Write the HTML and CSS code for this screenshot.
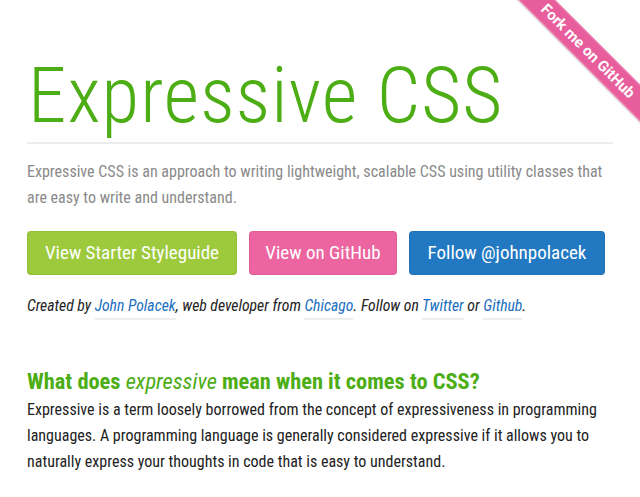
FILE: index.html
```html
<!DOCTYPE html>
<html lang="en">
<head>
<meta charset="utf-8">
<title>Expressive CSS</title>
<link rel="stylesheet" href="styles.css">
</head>
<body>
<a class="ribbon" href="#">Fork me on GitHub</a>
<main class="container">
  <header class="intro">
    <h1 class="title">Expressive CSS</h1>
    <p class="lead">Expressive CSS is an approach to writing lightweight, scalable CSS using utility classes that are easy to write and understand.</p>
  </header>
  <div class="actions">
    <a class="btn btn-green" href="#">View Starter Styleguide</a>
    <a class="btn btn-pink" href="#">View on GitHub</a>
    <a class="btn btn-blue" href="#">Follow @johnpolacek</a>
  </div>
  <p class="credit">Created by <a href="#">John Polacek</a>, web developer from <a href="#">Chicago</a>. Follow on <a href="#">Twitter</a> or <a href="#">Github</a>.</p>
  <section class="section">
    <h2 class="heading">What does <em>expressive</em> mean when it comes to CSS?</h2>
    <p class="body">Expressive is a term loosely borrowed from the concept of expressiveness in programming languages. A programming language is generally considered expressive if it allows you to naturally express your thoughts in code that is easy to understand.</p>
  </section>
</main>
</body>
</html>
```
FILE: styles.css
```css
html, body { margin: 0; padding: 0; }
body {
  background: #fff;
  font-family: "Roboto", "Open Sans", sans-serif;
  font-stretch: 75%;
  color: #222;
  overflow: hidden;
  position: relative;
  width: 640px;
  height: 497px;
}
.container {
  padding: 0 27px;
  width: 586px;
}
.intro { padding-top: 50px; }
.title {
  margin: 0;
  font-stretch: 75%;
  font-weight: 300;
  font-size: 77px;
  letter-spacing: 1.1px;
  line-height: 92px;
  color: #4cad14;
  padding-left: 1px;
  border-bottom: 2px solid #ececec;
}
.lead {
  margin: 15px 0 0;
  font-size: 16px;
  line-height: 26px;
  color: #8a8a8a;
}
.actions {
  display: flex;
  gap: 12px;
  margin-top: 20px;
}
.btn {
  display: block;
  height: 44px;
  line-height: 42px;
  box-sizing: border-box;
  border-radius: 4px;
  color: #fff;
  text-decoration: none;
  font-size: 19px;
  font-stretch: 80%;
  text-align: center;
  border: 1px solid rgba(0,0,0,0.06);
}
.btn-green { background: #9cca3c; width: 210px; }
.btn-pink { background: #ec64a0; width: 148px; }
.btn-blue { background: #2279c2; width: 196px; }
.credit {
  margin: 18px 0 0;
  font-style: italic;
  font-size: 15.7px;
  line-height: 26px;
  color: #222;
}
.credit a {
  color: #1a6fc0;
  text-decoration: none;
  border-bottom: 2px solid #eeeeee;
  padding-bottom: 3px;
}
.section { margin-top: 48px; }
.heading {
  margin: 0;
  font-size: 22.4px;
  font-weight: 700;
  color: #4cad14;
  line-height: 28px;
}
.heading em { font-weight: 400; }
.body {
  margin: 2px 0 0;
  font-size: 16px;
  line-height: 26px;
  color: #222;
}
.ribbon {
  position: absolute;
  top: 38px;
  right: -48px;
  width: 200px;
  transform: rotate(45deg);
  background: #e85d9b;
  color: #fff;
  text-decoration: none;
  text-align: center;
  font-weight: 700;
  font-size: 15px;
  font-stretch: 100%;
  line-height: 24px;
  border-top: 1px solid #f08ab8;
  border-bottom: 1px solid #f08ab8;
  box-shadow: 0 1px 2px rgba(0,0,0,0.2);
}
```
